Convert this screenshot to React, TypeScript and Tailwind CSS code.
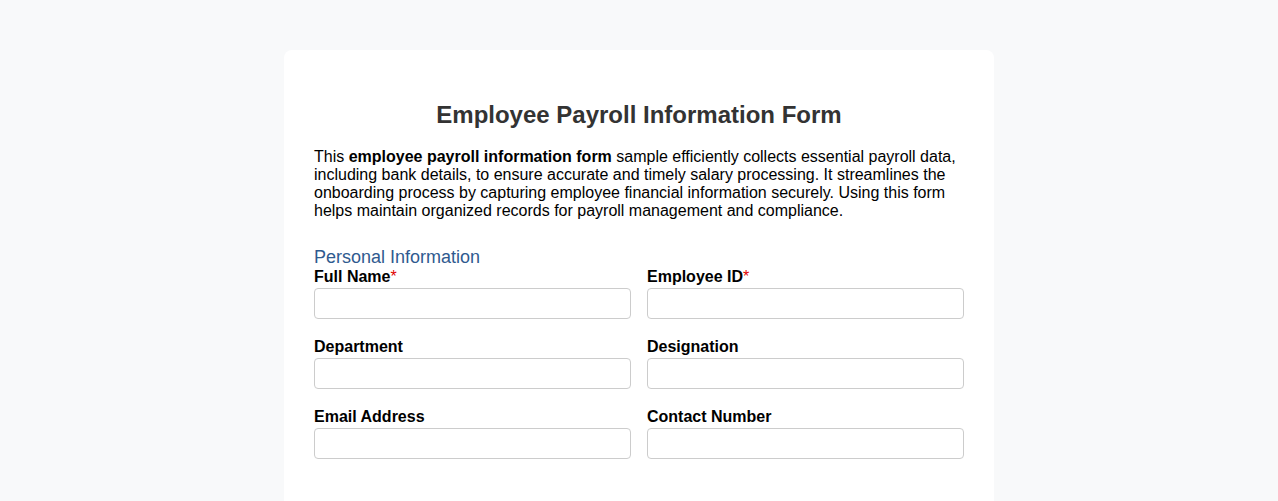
const fields: { label: string; required?: boolean }[][] = [
  [{ label: "Full Name", required: true }, { label: "Employee ID", required: true }],
  [{ label: "Department" }, { label: "Designation" }],
  [{ label: "Email Address" }, { label: "Contact Number" }],
];

export default function App() {
  return (
    <div className="min-h-screen bg-[#f8f9fa] pt-[50px] font-['Liberation_Sans',Arial,sans-serif] text-black">
      <div className="mx-auto w-[710px] rounded-lg bg-white px-[30px] pt-[51px] pb-16">
        <h1 className="mb-[19px] text-center text-[24px] font-bold leading-[28px] text-[#333333]">
          Employee Payroll Information Form
        </h1>
        <p className="text-[16px] leading-[18px]">
          This <strong>employee payroll information form</strong> sample efficiently collects essential payroll data,
          including bank details, to ensure accurate and timely salary processing. It streamlines the onboarding
          process by capturing employee financial information securely. Using this form helps maintain organized
          records for payroll management and compliance.
        </p>
        <h2 className="mt-[27px] text-[18px] leading-[21px] text-[#2f5a8f]">Personal Information</h2>
        <div className="flex flex-col gap-[19px]">
          {fields.map((row, i) => (
            <div key={i} className="grid grid-cols-2 gap-4">
              {row.map((f) => (
                <div key={f.label} className="flex flex-col">
                  <label className="mb-[2px] text-[16px] font-bold leading-[18px]">
                    {f.label}
                    {f.required && <span className="font-normal text-[#e00000]">*</span>}
                  </label>
                  <input
                    type="text"
                    className="h-[31px] rounded border border-[#cccccc] bg-white px-2 text-[16px] outline-none"
                  />
                </div>
              ))}
            </div>
          ))}
        </div>
      </div>
    </div>
  );
}
